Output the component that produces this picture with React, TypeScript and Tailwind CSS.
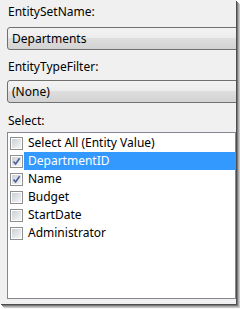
import type { ReactNode } from 'react';

type Field = {
  name: string;
  checked: boolean;
  selected?: boolean;
};

const fields: Field[] = [
  { name: 'Select All (Entity Value)', checked: false },
  { name: 'DepartmentID', checked: true, selected: true },
  { name: 'Name', checked: true },
  { name: 'Budget', checked: false },
  { name: 'StartDate', checked: false },
  { name: 'Administrator', checked: false },
];

const Label = ({ children, className = '' }: { children: ReactNode; className?: string }) => (
  <div className={`h-[16px] leading-[16px] pl-[1px] text-black ${className}`}>{children}</div>
);

const Combo = ({ value, className = '' }: { value: string; className?: string }) => (
  <div
    className={`w-[240px] h-[23px] border border-[#707070] rounded-l-[3px] flex items-center pl-[4px] text-black
      bg-[linear-gradient(to_bottom,#f3f3f3_0%,#ececec_50%,#dedede_50%,#d2d2d2_100%)] ${className}`}
  >
    {value}
  </div>
);

const CheckBox = ({ checked }: { checked: boolean }) => (
  <div className="w-[13px] h-[13px] border border-[#8e8f8f] bg-white p-[1px] shrink-0">
    <div className="relative w-full h-full bg-[linear-gradient(135deg,#cbcfd5_0%,#e4e6e9_60%,#f6f6f6_100%)]">
      {checked && (
        <svg viewBox="0 0 9 9" className="absolute inset-0 w-full h-full">
          <path d="M1.5 4.5 L3.6 7 L7.6 1.2" fill="none" stroke="#4a5f97" strokeWidth="1.6" />
        </svg>
      )}
    </div>
  </div>
);

export default function App() {
  return (
    <div className="w-[240px] h-[309px] bg-white" style={{ fontFamily: '"Noto Sans", "Open Sans", sans-serif' }}>
      <div
        className="w-[236px] h-[304px] bg-[#f0f0f0] overflow-hidden text-[12px] pl-[7px] pt-[4px]
          shadow-[1px_1px_0_#4e4e4e,2px_2px_0_#7a7a7a,3px_3px_1px_#a8a8a8,4px_4px_1px_#d0d0d0]"
      >
        <Label>EntitySetName:</Label>
        <Combo value="Departments" className="mt-[7px]" />

        <Label className="mt-[9px]">EntityTypeFilter:</Label>
        <Combo value="(None)" className="mt-[5px]" />

        <Label className="mt-[10px]">Select:</Label>
        <div className="mt-[3px] w-[229px] h-[167px] border border-[#828790] bg-white pt-[1px]">
          {fields.map((f) => (
            <div key={f.name} className="h-[18px] flex items-center pl-[2px]">
              <CheckBox checked={f.checked} />
              <div
                className={`ml-[1px] h-full flex-1 flex items-center pl-[4px] ${
                  f.selected ? 'bg-[#3399ff] text-white' : 'text-black'
                }`}
              >
                {f.name}
              </div>
            </div>
          ))}
        </div>
      </div>
    </div>
  );
}
